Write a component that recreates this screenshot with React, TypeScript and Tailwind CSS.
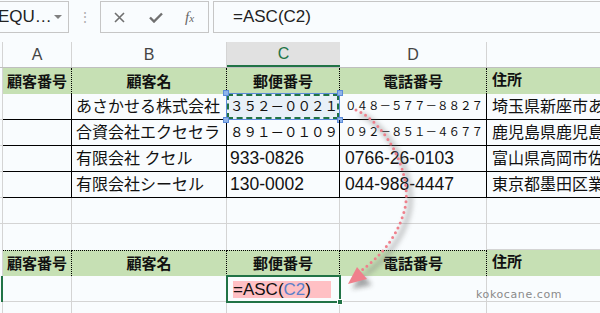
import React from 'react'

const GRID = 'border-[#d4d4d4]'

function Cell({ className = '', children }: { className?: string; children?: React.ReactNode }) {
  return (
    <div className={`h-full flex items-center overflow-hidden whitespace-nowrap leading-none shrink-0 ${className}`}>
      {children}
    </div>
  )
}

// 罫線付きデータ行
function DataRow({ name, zip, tel, addr, zipClass, telClass, selected }: {
  name: string
  zip: string
  tel: string
  addr: string
  zipClass: string
  telClass: string
  selected?: boolean
}) {
  return (
    <div className="flex h-[26px]">
      <Cell className={`w-[3px] border-r border-b ${GRID}`} />
      <Cell className="w-[69px] border-r border-b border-black" />
      <Cell className="w-[155px] border-r border-b border-black pl-[4px] text-[16px]">{name}</Cell>
      <div className="relative w-[113px] h-full shrink-0">
        <Cell className={`w-full border-r border-b border-black pl-[3px] ${zipClass} ${selected ? 'bg-[#e8f0f8]' : ''}`}>{zip}</Cell>
        {selected && (
          <>
            <div className="absolute -left-[1px] -top-[1px] -right-[0px] -bottom-[0px] border border-[#5b8bd9]">
              <div className="w-full h-full border-2 border-dashed border-[#217346]" />
            </div>
            <span className="absolute -left-[4px] -top-[4px] w-[6px] h-[6px] bg-[#8fb4ea] border border-[#5b8bd9]" />
            <span className="absolute -right-[3px] -top-[4px] w-[6px] h-[6px] bg-[#8fb4ea] border border-[#5b8bd9]" />
            <span className="absolute -left-[4px] -bottom-[3px] w-[6px] h-[6px] bg-[#8fb4ea] border border-[#5b8bd9]" />
            <span className="absolute -right-[3px] -bottom-[3px] w-[6px] h-[6px] bg-[#8fb4ea] border border-[#5b8bd9]" />
          </>
        )}
      </div>
      <Cell className={`w-[147px] border-r border-b border-black pl-[5px] ${telClass}`}>{tel}</Cell>
      <Cell className="flex-1 border-b border-black pl-[5px] text-[16px]">{addr}</Cell>
    </div>
  )
}

function EmptyRow() {
  return (
    <div className="flex h-[26px]">
      <Cell className={`w-[3px] border-r border-b ${GRID}`} />
      <Cell className={`w-[69px] border-r border-b ${GRID}`} />
      <Cell className={`w-[155px] border-r border-b ${GRID}`} />
      <Cell className={`w-[113px] border-r border-b ${GRID}`} />
      <Cell className={`w-[147px] border-r border-b ${GRID}`} />
      <Cell className={`flex-1 border-b ${GRID}`} />
    </div>
  )
}

function HeaderRow({ top }: { top?: boolean }) {
  const t = top ? '' : 'border-t'
  return (
    <div className="flex h-[26px] font-bold text-[15px]">
      <Cell className={`w-[3px] border-r ${GRID}`} />
      <Cell className={`w-[69px] bg-[#c6e0b4] border-r ${t} border-dotted border-black justify-center`}>顧客番号</Cell>
      <Cell className={`w-[155px] bg-[#c6e0b4] border-r ${t} border-dotted border-black justify-center`}>顧客名</Cell>
      <Cell className={`w-[113px] bg-[#c6e0b4] border-r ${t} border-dotted border-black justify-center`}>郵便番号</Cell>
      <Cell className={`w-[147px] bg-[#c6e0b4] border-r ${t} border-dotted border-black justify-center`}>電話番号</Cell>
      <Cell className="flex-1 bg-[#c6e0b4] pl-[5px] items-start pt-[4px]">住所</Cell>
    </div>
  )
}

export default function App() {
  return (
    <div className="relative w-[600px] h-[313px] overflow-hidden bg-[#f9fcfe] text-[#111] font-['Liberation_Sans','Noto_Sans_CJK_JP',sans-serif]">
      {/* 数式バー */}
      <div className="flex h-[42px] pt-[1px]">
        <div className="w-[69px] h-[32px] border border-l-0 border-[#c6c6c6] flex items-center justify-between pr-[6px]">
          <span className="-ml-[2px] text-[17px] text-[#222]">EQU…</span>
          <span className="w-0 h-0 border-l-[4px] border-r-[4px] border-t-[4px] border-l-transparent border-r-transparent border-t-[#808080]" />
        </div>
        <div className="w-[31px] h-[32px] flex items-center justify-center text-[#b0b0b0] text-[14px]">⋮</div>
        <div className="w-[109px] h-[32px] border border-[#c6c6c6] flex items-center text-[#6b6b6b]">
          <svg className="ml-[13px]" width="11" height="11" viewBox="0 0 11 11">
            <path d="M1 1 L10 10 M10 1 L1 10" stroke="#707070" strokeWidth="1.6" fill="none" />
          </svg>
          <svg className="ml-[24px]" width="14" height="11" viewBox="0 0 14 11">
            <path d="M1 5.5 L5 9.5 L13 1.5" stroke="#707070" strokeWidth="2.4" fill="none" />
          </svg>
          <span className="ml-[22px] italic text-[15px] font-['Liberation_Serif',serif] text-[#666]">f<span className="text-[11px]">x</span></span>
        </div>
        <div className="ml-[4px] flex-1 h-[32px] border border-r-0 border-[#c6c6c6] flex items-center pl-[19px] text-[17px] text-[#222]">
          =ASC(C2)
        </div>
      </div>

      {/* 列見出し */}
      <div className="flex h-[26px] border-b border-[#bfbfbf] text-[16px] text-[#444]">
        <Cell className={`w-[3px] border-r ${GRID}`} />
        <Cell className={`w-[69px] border-r ${GRID} justify-center`}>A</Cell>
        <Cell className={`w-[155px] border-r ${GRID} justify-center`}>B</Cell>
        <Cell className="w-[113px] bg-[#e1e1e1] border-b-2 border-[#217346] justify-center text-[#217346]">C</Cell>
        <Cell className={`w-[147px] border-r ${GRID} justify-center`}>D</Cell>
        <Cell className="flex-1" />
      </div>

      <HeaderRow top />
      <DataRow name="あさかせる株式会社" zip="３５２－００２１" tel="０４８－５７７－８８２７" addr="埼玉県新座市あたご" zipClass="text-[13.5px]" telClass="text-[11.5px]" selected />
      <DataRow name="合資会社エクセセラ" zip="８９１－０１０９" tel="０９２－８５１－４６７７" addr="鹿児島県鹿児島市" zipClass="text-[13.5px]" telClass="text-[11.5px]" />
      <DataRow name="有限会社 クセル" zip="933-0826" tel="0766-26-0103" addr="富山県高岡市佐野" zipClass="text-[17.5px]" telClass="text-[17.5px]" />
      <DataRow name="有限会社シーセル" zip="130-0002" tel="044-988-4447" addr="東京都墨田区業平" zipClass="text-[17.5px]" telClass="text-[17.5px]" />
      <EmptyRow />
      <div className="flex h-[26px]">
        <Cell className={`w-[3px] border-r ${GRID}`} />
        <Cell className={`w-[69px] border-r ${GRID}`} />
        <Cell className={`w-[155px] border-r ${GRID}`} />
        <Cell className={`w-[113px] border-r ${GRID}`} />
        <Cell className={`w-[147px] border-r ${GRID}`} />
        <Cell className={`flex-1 border-b ${GRID}`} />
      </div>
      <HeaderRow />

      {/* 入力中のセル */}
      <div className="flex h-[26px]">
        <Cell className="w-[3px] border-r-2 border-[#217346]" />
        <Cell className={`w-[69px] border-r border-b ${GRID}`} />
        <Cell className={`w-[155px] border-r border-b ${GRID}`} />
        <div className="relative w-[113px] h-full shrink-0">
          <Cell className="w-full pl-[6px] text-[17px]">
            <span className="bg-[#ffc0c4] w-[98px] h-[17px] flex items-center">
              =ASC(<span className="text-[#5b7fc9]">C2</span>)
            </span>
          </Cell>
          <div className="absolute -left-[1px] -top-[1px] -right-[1px] -bottom-[1px] border-2 border-[#217346]" />
          <span className="absolute -right-[3px] -bottom-[3px] w-[6px] h-[6px] bg-[#217346] border border-white" />
        </div>
        <Cell className={`w-[147px] border-r border-b ${GRID}`} />
        <Cell className={`flex-1 border-b ${GRID}`} />
      </div>
      <EmptyRow />

      {/* 矢印 */}
      <svg className="absolute left-0 top-0 pointer-events-none" width="600" height="313">
        <defs>
          <filter id="sh" x="-50%" y="-50%" width="200%" height="200%">
            <feGaussianBlur stdDeviation="2.5" />
          </filter>
        </defs>
        <g filter="url(#sh)" opacity="0.4">
          <path d="M360,114 C389,126 419,179 408,216 C400,244 382,262 366,274" stroke="#777" strokeWidth="5" fill="none" />
          <polygon points="352,289 361,273 372,285" fill="#222" />
        </g>
        <path d="M356,110 C385,122 415,175 404,212 C396,240 378,258 362,270" stroke="#ef808c" strokeWidth="3" strokeDasharray="0 5.5" strokeLinecap="round" fill="none" />
        <polygon points="348,284 357,267 367,279" fill="#ef808c" />
      </svg>

      <span className="absolute left-[476px] top-[287px] text-[11px] tracking-[0.6px] text-[#8a8a8a] font-['DejaVu_Sans',sans-serif]">kokocane.com</span>
    </div>
  )
}
